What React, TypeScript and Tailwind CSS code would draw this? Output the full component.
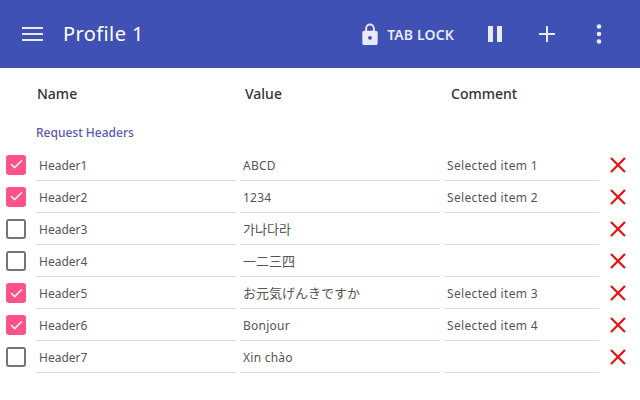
import { Check } from 'lucide-react'

const rows = [
  { name: 'Header1', value: 'ABCD', comment: 'Selected item 1', checked: true, cjk: false },
  { name: 'Header2', value: '1234', comment: 'Selected item 2', checked: true, cjk: false },
  { name: 'Header3', value: '가나다라', comment: '', checked: false, cjk: true },
  { name: 'Header4', value: '一二三四', comment: '', checked: false, cjk: true },
  { name: 'Header5', value: 'お元気げんきですか', comment: 'Selected item 3', checked: true, cjk: true },
  { name: 'Header6', value: 'Bonjour', comment: 'Selected item 4', checked: true, cjk: false },
  { name: 'Header7', value: 'Xin chào', comment: '', checked: false, cjk: false },
]

function Row({ name, value, comment, checked, cjk }: (typeof rows)[number]) {
  return (
    <div className="flex h-[32.17px] items-start">
      <div className="flex w-[36px] shrink-0 pl-[6px] pt-[2px]">
        {checked ? (
          <div className="flex h-[20px] w-[20px] items-center justify-center rounded-[3px] bg-[#ff5288]">
            <Check size={15} strokeWidth={2.6} className="text-[#ffeef3]" />
          </div>
        ) : (
          <div className="h-[20px] w-[20px] rounded-[3px] border-2 border-[#757575]" />
        )}
      </div>
      <div className="flex h-[28px] w-[200px] shrink-0 items-center border-b border-[#d9d9d9] pb-[1px] pl-[3px]">
        {name}
      </div>
      <div
        className={
          cjk
            ? 'ml-[4px] flex h-[28px] w-[200px] shrink-0 items-center border-b border-[#d9d9d9] pb-[1px] pl-[3px] text-[13px]'
            : 'ml-[4px] flex h-[28px] w-[200px] shrink-0 items-center border-b border-[#d9d9d9] pb-[1px] pl-[3px] tracking-[0.25px]'
        }
      >
        {value}
      </div>
      <div className="ml-[5px] flex h-[28px] w-[154px] shrink-0 items-center border-b border-[#d9d9d9] pb-[1px] pl-[2px] tracking-[0.33px]">
        {comment}
      </div>
      <div className="pl-[11px] pt-[4px]">
        <svg width="16" height="16" viewBox="0 0 16 16" fill="none" stroke="#ee1111" strokeWidth="2.2">
          <path d="M1 1L15 15M15 1L1 15" />
        </svg>
      </div>
    </div>
  )
}

export default function App() {
  return (
    <div className="h-[400px] w-[640px] overflow-hidden bg-white font-['Noto_Sans','Noto_Sans_CJK_KR',sans-serif] text-[#555]">
      <header className="flex h-[68px] items-center bg-[#3f51b5] text-white">
        <svg width="22" height="16" viewBox="0 0 22 16" className="ml-[22px]" fill="none" stroke="#e8eaf6" strokeWidth="2">
          <path d="M0 2h21M0 8h21M0 14h21" />
        </svg>
        <h1 className="ml-[19px] text-[20px] tracking-[0.4px]">Profile 1</h1>
        <div className="ml-auto flex items-center">
          <svg width="18" height="23" viewBox="0 0 18 24" fill="#e8eaf6">
            <path fillRule="evenodd" d="M15 8h-1V5.500a5 5 0 0 0-10 0V8H3a2 2 0 0 0-2 2v11a2 2 0 0 0 2 2h12a2 2 0 0 0 2-2V10a2 2 0 0 0-2-2zM6 5.500a3 3 0 0 1 6 0V8H6zM9 17.500a2 2 0 1 1 0-4 2 2 0 0 1 0 4z" />
          </svg>
          <span className="ml-[8px] text-[14px] font-semibold tracking-[0.15px] text-[#e8eaf6]">TAB LOCK</span>
          <svg width="14" height="16" viewBox="0 0 14 16" fill="#e8eaf6" className="ml-[34px]">
            <path d="M0 0h5v16H0zM9 0h5v16H9z" />
          </svg>
          <svg width="16" height="16" viewBox="0 0 16 16" stroke="#e8eaf6" strokeWidth="2" className="ml-[37px]">
            <path d="M8 0v16M0 8h16" />
          </svg>
          <svg width="6" height="20" viewBox="0 0 6 20" fill="#e8eaf6" className="ml-[41px] mr-[38px]">
            <circle cx="3" cy="2.500" r="2.300" />
            <circle cx="3" cy="10" r="2.300" />
            <circle cx="3" cy="17.500" r="2.300" />
          </svg>
        </div>
      </header>
      <div className="flex h-[50px] items-center text-[14px] font-medium text-[#333]">
        <span className="ml-[37px] w-[208px]">Name</span>
        <span className="w-[206px]">Value</span>
        <span>Comment</span>
      </div>
      <div className="ml-[36px] h-[34.500px] pt-[5px] text-[12px] font-medium leading-[20px] text-[#5659b5]">Request Headers</div>
      <div className="text-[12px]">
        {rows.map((row) => (
          <Row key={row.name} {...row} />
        ))}
      </div>
    </div>
  )
}
